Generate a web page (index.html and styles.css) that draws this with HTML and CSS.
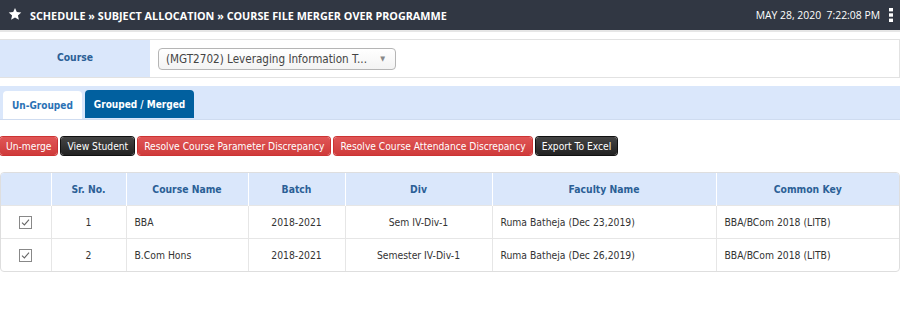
FILE: index.html
```html
<!DOCTYPE html>
<html>
<head>
  <meta charset="UTF-8">
  <link rel="stylesheet" href="styles.css">
</head>
<body>

  <!-- top bar -->
  <div class="topbar">
    <div class="crumbs">
      <svg class="star" width="14" height="14" viewBox="0 0 24 24"><path fill="#fff" d="M12 1.5l3.1 7.1 7.7.7-5.8 5.1 1.7 7.6L12 18l-6.7 4 1.7-7.6-5.8-5.1 7.7-.7z"/></svg>
      <span>SCHEDULE » SUBJECT ALLOCATION » COURSE FILE MERGER OVER PROGRAMME</span>
    </div>
    <div class="clock">
      <span>MAY 28, 2020&nbsp;&nbsp;7:22:08 PM</span>
      <svg class="kebab" width="4" height="14" viewBox="0 0 4 14"><rect x="0" y="0" width="4" height="3.4" fill="#fff"/><rect x="0" y="5.3" width="4" height="3.4" fill="#fff"/><rect x="0" y="10.6" width="4" height="3.4" fill="#fff"/></svg>
    </div>
  </div>

  <!-- course filter -->
  <div class="filter">
    <div class="filter-label">Course</div>
    <div class="filter-field">
      <div class="fake-select">
        <span>(MGT2702) Leveraging Information T...</span>
        <span class="caret">▼</span>
      </div>
    </div>
  </div>

  <!-- tabs -->
  <div class="tabs">
    <div class="tab">Un-Grouped</div>
    <div class="tab active">Grouped / Merged</div>
  </div>

  <div class="actions">
    <button class="btn red">Un-merge</button>
    <button class="btn dark">View Student</button>
    <button class="btn red">Resolve Course Parameter Discrepancy</button>
    <button class="btn red">Resolve Course Attendance Discrepancy</button>
    <button class="btn dark">Export To Excel</button>
  </div>

  <div class="grid-wrap">
    <table class="grid">
      <colgroup>
        <col class="c-chk">
        <col class="c-sr">
        <col class="c-name">
        <col class="c-batch">
        <col class="c-div">
        <col class="c-fac">
        <col>
      </colgroup>
      <thead>
        <tr>
          <th></th>
          <th>Sr. No.</th>
          <th>Course Name</th>
          <th>Batch</th>
          <th>Div</th>
          <th>Faculty Name</th>
          <th>Common Key</th>
        </tr>
      </thead>
      <tbody>
        <tr>
          <td class="center"><span class="chk"><svg width="9" height="9" viewBox="0 0 9 9"><path d="M1 4.6l2.4 2.3L8 1.6" fill="none" stroke="#666" stroke-width="1.1"/></svg></span></td>
          <td class="center">1</td>
          <td>BBA</td>
          <td class="center">2018-2021</td>
          <td class="center">Sem IV-Div-1</td>
          <td>Ruma Batheja (Dec 23,2019)</td>
          <td>BBA/BCom 2018 (LITB)</td>
        </tr>
        <tr>
          <td class="center"><span class="chk"><svg width="9" height="9" viewBox="0 0 9 9"><path d="M1 4.6l2.4 2.3L8 1.6" fill="none" stroke="#666" stroke-width="1.1"/></svg></span></td>
          <td class="center">2</td>
          <td>B.Com Hons</td>
          <td class="center">2018-2021</td>
          <td class="center">Semester IV-Div-1</td>
          <td>Ruma Batheja (Dec 26,2019)</td>
          <td>BBA/BCom 2018 (LITB)</td>
        </tr>
      </tbody>
    </table>
  </div>

</body>
</html>
```

FILE: styles.css
```css
body {
  margin: 0;
  width: 900px;
  font-family: "DejaVu Sans Condensed", "DejaVu Sans", sans-serif;
  font-size: 10.3px;
  color: #333;
  background: #fff;
}

.topbar {
  height: 30px;
  background: #313743;
  border-bottom: 2px solid #e6e6e6;
  display: flex;
  align-items: center;
  justify-content: space-between;
  color: #fff;
  padding: 0 7px 0 8px;
}
.crumbs {
  display: flex;
  align-items: center;
  gap: 8px;
  font-family: "Open Sans", sans-serif;
  font-weight: bold;
  font-size: 10.8px;
}
.star {
  margin-top: -2px;
}
.clock {
  display: flex;
  align-items: center;
  gap: 9px;
  font-family: "Open Sans", sans-serif;
  font-size: 10.4px;
}

.filter {
  display: flex;
  margin-top: 7px;
  height: 37px;
  border: 1px solid #e2e2e2;
  border-left: none;
}
.filter-label {
  width: 150px;
  background: #dae7fb;
  display: flex;
  align-items: center;
  justify-content: center;
  font-weight: bold;
  color: #2b5f96;
  padding-bottom: 4px;
  box-sizing: border-box;
}
.filter-field {
  flex: 1;
  padding: 8px;
}
.fake-select {
  width: 238px;
  height: 22px;
  box-sizing: border-box;
  border: 1px solid #b5b5b5;
  border-radius: 4px;
  background: linear-gradient(#fff, #f3f3f3);
  display: flex;
  align-items: center;
  justify-content: space-between;
  padding: 0 10px 0 7px;
  font-size: 11.6px;
  color: #444;
}
.caret {
  font-size: 7px;
  color: #888;
}

.tabs {
  margin-top: 8px;
  height: 33px;
  background: #dae7fb;
  display: flex;
  align-items: flex-end;
  gap: 3px;
  padding-left: 3px;
  border-bottom: 1px solid #cfdcf0;
}
.tab {
  height: 28px;
  padding: 0 9px;
  display: flex;
  align-items: center;
  font-weight: bold;
  font-size: 10px;
  color: #2b72b5;
  background: #fff;
  border-radius: 4px 4px 0 0;
}
.tab.active {
  background: #01609f;
  color: #fff;
  margin-bottom: 1px;
}

.actions {
  margin-top: 17px;
  display: flex;
  gap: 4px;
}
.btn {
  font-family: inherit;
  font-size: 10.2px;
  color: #fff;
  height: 18px;
  padding: 0 6px;
  border-radius: 3px;
  border: none;
  cursor: pointer;
}
.btn.red {
  background: linear-gradient(#e05656, #cf3b3b);
  box-shadow: 0 0 0 1px #c33;
}
.btn.dark {
  background: linear-gradient(#444, #222);
  box-shadow: 0 0 0 1px #111;
}

.grid-wrap {
  margin-top: 17px;
  border: 1px solid #dedede;
  border-radius: 4px;
  overflow: hidden;
}
.grid {
  width: 100%;
  border-collapse: collapse;
  table-layout: fixed;
}
.grid th {
  height: 32px;
  padding: 0;
  background: #dae7fb;
  color: #2b5f96;
  font-weight: bold;
  border-left: 1px solid #fff;
  text-align: center;
}
.grid th:first-child {
  border-left: none;
}
.grid td {
  height: 32px;
  padding: 0 8px;
  border-left: 1px solid #e6e6e6;
  border-top: 1px solid #e6e6e6;
  color: #333;
}
.grid td:first-child {
  border-left: none;
}
.center {
  text-align: center;
}
.c-chk { width: 50px; }
.c-sr { width: 75px; }
.c-name { width: 122px; }
.c-batch { width: 97px; }
.c-div { width: 147px; }
.c-fac { width: 224px; }
.chk {
  display: inline-flex;
  align-items: center;
  justify-content: center;
  width: 11px;
  height: 11px;
  border: 1px solid #888;
  vertical-align: middle;
}
```
